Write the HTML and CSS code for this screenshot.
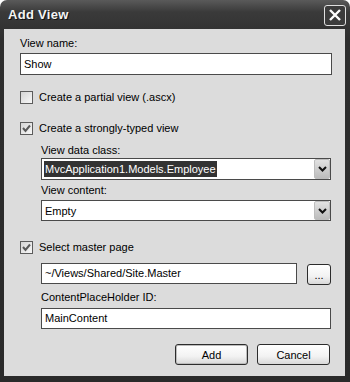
FILE: index.html
```html
<!DOCTYPE html>
<html lang="en">
<head>
    <meta charset="UTF-8">
    <title>Add View</title>
    <link rel="stylesheet" href="styles.css">
</head>
<body>
    <div class="window">
        <div class="titlebar">
            <span class="title">Add View</span>
            <span class="close">
                <svg width="14" height="14" viewBox="0 0 14 14"><path d="M2 2 L12 12 M12 2 L2 12" stroke="#fff" stroke-width="2.4" fill="none"/></svg>
            </span>
        </div>
        <div class="dialog">
            <div class="label first">View name:</div>
            <div class="field">Show</div>

            <div class="check c1"><span class="box"></span>Create a partial view (.ascx)</div>
            <div class="check c2"><span class="box"><svg width="11" height="11" viewBox="0 0 11 11"><path d="M2 5 L4.5 8 L9 2.5" stroke="#5a5a5a" stroke-width="2" fill="none"/></svg></span>Create a strongly-typed view</div>

            <div class="group">
                <div class="label l-class">View data class:</div>
                <div class="select s1">
                    <span class="value selected">MvcApplication1.Models.Employee</span>
                    <span class="drop"><svg width="9" height="6" viewBox="0 0 9 6"><path d="M1 1 L4.5 4.5 L8 1" stroke="#111" stroke-width="2" fill="none"/></svg></span>
                </div>
                <div class="label l-content">View content:</div>
                <div class="select s2">
                    <span class="value">Empty</span>
                    <span class="drop"><svg width="9" height="6" viewBox="0 0 9 6"><path d="M1 1 L4.5 4.5 L8 1" stroke="#111" stroke-width="2" fill="none"/></svg></span>
                </div>
            </div>

            <div class="check c3"><span class="box"><svg width="11" height="11" viewBox="0 0 11 11"><path d="M2 5 L4.5 8 L9 2.5" stroke="#5a5a5a" stroke-width="2" fill="none"/></svg></span>Select master page</div>

            <div class="group">
                <div class="master-row">
                    <div class="field grow">~/Views/Shared/Site.Master</div>
                    <button class="btn browse">...</button>
                </div>
                <div class="label l-holder">ContentPlaceHolder ID:</div>
                <div class="field holder">MainContent</div>
            </div>

            <div class="actions">
                <button class="btn default">Add</button>
                <button class="btn">Cancel</button>
            </div>
        </div>
    </div>
</body>
</html>
```

FILE: styles.css
```css
* {
    box-sizing: border-box;
}
body {
    margin: 0;
    background: #fff;
    font-family: "Liberation Sans", Arial, sans-serif;
    font-size: 11px;
    color: #000;
}
.window {
    width: 350px;
    height: 382px;
    display: flex;
    flex-direction: column;
    background: linear-gradient(to bottom, #5a5a5a 0, #3a3a3a 12px, #2e2e2e 40px, #2a2a2a);
    border-radius: 7px 7px 0 0;
    padding: 0 5px 6px 4px;
}
.titlebar {
    height: 29px;
    display: flex;
    align-items: center;
    justify-content: space-between;
    padding: 0 0 0 4px;
    margin-right: -1px;
}
.title {
    color: #f4f4f4;
    font-weight: bold;
    font-size: 13px;
    text-shadow: 1px 1px 0 #111;
    letter-spacing: 0.3px;
}
.close {
    width: 22px;
    height: 21px;
    margin-top: 1px;
    border: 1px solid #e0e0e0;
    border-radius: 3px;
    background: #3c3c3c;
    display: flex;
    align-items: center;
    justify-content: center;
}
.dialog {
    flex: 1;
    background: #dcdcdc;
    padding: 8px 13px 0 16px;
    display: flex;
    flex-direction: column;
}
.label {
    line-height: 13px;
    height: 13px;
}
.field {
    height: 22px;
    margin-top: 3px;
    background: #fff;
    border: 1px solid #4a4a4a;
    padding: 0 3px;
    line-height: 20px;
    white-space: nowrap;
}
.check {
    display: flex;
    align-items: center;
    height: 13px;
    line-height: 13px;
}
.check .box {
    width: 13px;
    height: 13px;
    margin-right: 6px;
    border: 1px solid #5c5c5c;
    background: linear-gradient(135deg, #d4d4d4, #f8f8f8);
    display: flex;
    align-items: center;
    justify-content: center;
}
.c1 { margin-top: 16px; }
.c2 { margin-top: 18px; }
.c3 { margin-top: 20px; }
.group {
    margin-left: 21px;
    margin-right: 1px;
    display: flex;
    flex-direction: column;
}
.l-class { margin-top: 9px; }
.l-content { margin-top: 4px; }
.l-holder { margin-top: 6px; }
.select {
    height: 22px;
    margin-top: 1px;
    background: #fff;
    border: 1px solid #4a4a4a;
    display: flex;
    align-items: center;
    justify-content: space-between;
    padding: 0 0 0 2px;
}
.s2 { margin-top: 3px; height: 21px; }
.select .value {
    padding: 0 1px;
    line-height: 16px;
}
.select .selected {
    background: #333;
    color: #fff;
}
.drop {
    width: 16px;
    align-self: stretch;
    margin: 0;
    border: 1px solid #bdbdbd;
    border-radius: 2px;
    background: linear-gradient(to bottom, #e2e2e2, #bcbcbc);
    display: flex;
    align-items: center;
    justify-content: center;
}
.master-row {
    display: flex;
    align-items: flex-start;
    gap: 10px;
    margin-top: 9px;
}
.master-row .field {
    margin-top: 0;
    height: 21px;
    line-height: 19px;
}
.grow { flex: 1; }
.holder {
    margin-top: 4px;
    height: 21px;
    line-height: 19px;
}
.btn {
    font-family: inherit;
    font-size: 11px;
    color: #000;
    height: 21px;
    width: 73px;
    border: 1px solid #2c2c2c;
    border-radius: 3px;
    background: linear-gradient(to bottom, #ffffff, #f2f2f2 60%, #d8d8d8);
    padding: 0;
}
.browse {
    width: 24px;
    margin-top: 1px;
    line-height: 14px;
}
.default {
    box-shadow: inset 0 0 0 1px #bcbcbc;
}
.actions {
    display: flex;
    justify-content: flex-end;
    gap: 9px;
    margin-top: 15px;
    margin-right: 2px;
}
```
